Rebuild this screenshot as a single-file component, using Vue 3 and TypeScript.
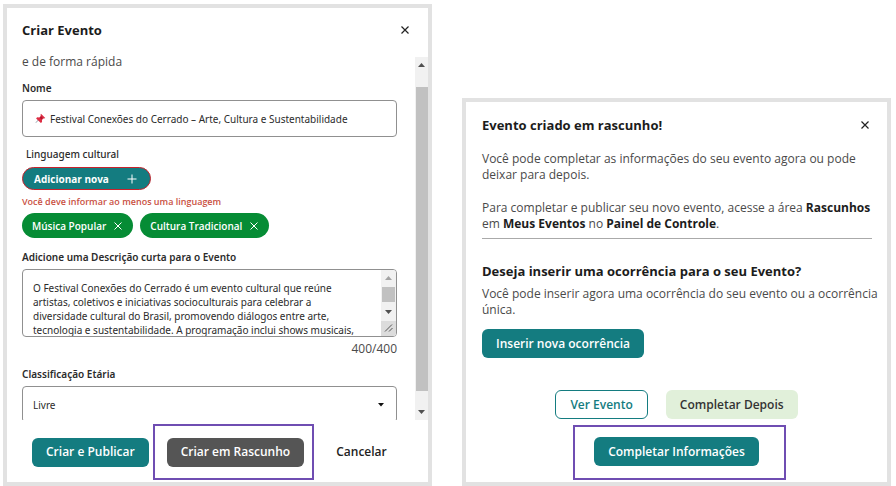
<script setup lang="ts">
import { ref } from 'vue'

const name = ref('Festival Conexões do Cerrado – Arte, Cultura e Sustentabilidade')
const description = ref(
  'O Festival Conexões do Cerrado é um evento cultural que reúne artistas, coletivos e iniciativas socioculturais para celebrar a diversidade cultural do Brasil, promovendo diálogos entre arte, tecnologia e sustentabilidade. A programação inclui shows musicais,'
)
const rating = ref('Livre')
const languages = ref<string[]>(['Música Popular', 'Cultura Tradicional'])

function removeLanguage(item: string): void {
  languages.value = languages.value.filter((l) => l !== item)
}
</script>

<template>
  <main class="stage">
    <section class="dialog" role="dialog" aria-labelledby="create-title">
      <header class="head">
        <h2 id="create-title">Criar Evento</h2>
        <button class="close" type="button" aria-label="Fechar">
          <svg viewBox="0 0 8 8" width="8" height="8"><path d="M.5.5l7 7M7.5.5l-7 7" /></svg>
        </button>
      </header>

      <div class="scroller">
        <form id="event-form" class="form" @submit.prevent>
          <p class="intro">e de forma rápida</p>

          <label class="label" for="name">Nome</label>
          <div class="field name-field">
            <svg class="pin" viewBox="0 0 12 12" width="11" height="11">
              <path d="M3.600 7.600L1 10.600" stroke="#8a97a0" stroke-width="1" />
              <path d="M6.500.8l4.700 4.700-1.200.6-.9-.2-1.500 1.600.1 2.300-1.300 1.200L1.200 6l1.200-1.300 2.300.1L6.300 3.200 6 2.200z" fill="#dd2e44" />
              <path d="M5.200 5.200l1.800 1.800 1.500-1.500-1.900-1.900z" fill="#b3152d" />
            </svg>
            <input id="name" v-model="name" type="text" />
          </div>

          <span id="lang-label" class="label lang-label">Linguagem cultural</span>
          <button class="add" type="button" aria-describedby="lang-error">
            Adicionar nova
            <svg viewBox="0 0 10 10" width="10" height="10"><path d="M5 .5v9M.5 5h9" /></svg>
          </button>
          <p id="lang-error" class="error">Você deve informar ao menos uma linguagem</p>
          <ul class="chips" aria-labelledby="lang-label">
            <li v-for="item in languages" :key="item" class="chip">
              {{ item }}
              <button type="button" :aria-label="`Remover ${item}`" @click="removeLanguage(item)">
                <svg viewBox="0 0 8 8" width="8" height="8"><path d="M.5.5l7 7M7.5.5l-7 7" /></svg>
              </button>
            </li>
          </ul>

          <label class="label desc-label" for="desc">Adicione uma Descrição curta para o Evento</label>
          <div class="field desc-field">
            <textarea id="desc" v-model="description" />
            <div class="bar" aria-hidden="true">
              <svg class="arrow muted" viewBox="0 0 7 4" width="7" height="4"><path d="M0 4l3.500-4L7 4z" /></svg>
              <span class="bar-thumb"></span>
              <svg class="arrow" viewBox="0 0 7 4" width="7" height="4"><path d="M0 0l3.500 4L7 0z" /></svg>
              <span class="grip">
                <svg viewBox="0 0 10 10" width="10" height="10"><path d="M1 8.500l7-7M5 8.500l3.500-3.500" /></svg>
              </span>
            </div>
          </div>
          <p class="counter">400/400</p>

          <label class="label" for="rating">Classificação Etária</label>
          <div class="field select-field">
            <select id="rating" v-model="rating">
              <option>Livre</option>
            </select>
            <svg viewBox="0 0 6 4" width="6" height="4"><path d="M0 0h6L3 3.500z" /></svg>
          </div>
        </form>

        <div class="scrollbar" aria-hidden="true">
          <svg class="arrow" viewBox="0 0 7 4" width="7" height="4"><path d="M0 4l3.500-4L7 4z" /></svg>
          <span class="thumb"></span>
          <svg class="arrow" viewBox="0 0 7 4" width="7" height="4"><path d="M0 0l3.500 4L7 0z" /></svg>
        </div>
      </div>

      <footer class="foot">
        <button class="btn" type="submit" form="event-form">Criar e Publicar</button>
        <div class="marked">
          <button class="btn dark" type="button">Criar em Rascunho</button>
        </div>
        <button class="btn plain" type="button">Cancelar</button>
      </footer>
    </section>

    <section class="dialog" role="dialog" aria-labelledby="draft-title">
      <header class="head draft-head">
        <h2 id="draft-title">Evento criado em rascunho!</h2>
        <button class="close" type="button" aria-label="Fechar">
          <svg viewBox="0 0 8 8" width="8" height="8"><path d="M.5.5l7 7M7.5.5l-7 7" /></svg>
        </button>
      </header>
      <div class="draft-body">
        <p>Você pode completar as informações do seu evento agora ou pode deixar para depois.</p>
        <p class="second">
          Para completar e publicar seu novo evento, acesse a área <b>Rascunhos</b> em
          <b>Meus Eventos</b> no <b>Painel de Controle</b>.
        </p>
        <hr />
        <h3>Deseja inserir uma ocorrência para o seu Evento?</h3>
        <p>Você pode inserir agora uma ocorrência do seu evento ou a ocorrência única.</p>
        <button class="btn insert" type="button">Inserir nova ocorrência</button>
      </div>
      <footer class="draft-foot">
        <button class="btn outline" type="button">Ver Evento</button>
        <button class="btn soft" type="button">Completar Depois</button>
        <div class="marked wide">
          <button class="btn" type="button">Completar Informações</button>
        </div>
      </footer>
    </section>
  </main>
</template>

<style>
body {
  margin: 0;
  background: #fff;
}
</style>

<style scoped>
* {
  box-sizing: border-box;
}

.stage {
  display: grid;
  grid-template-columns: 1fr 1fr;
  align-items: end;
  gap: 30px;
  min-height: 100vh;
  padding: 4px 5px 0 3px;
  font: 12px/16px 'Open Sans', 'Noto Sans', sans-serif;
  color: #2b2b2b;
}

h2,
h3,
p,
ul {
  margin: 0;
  padding: 0;
}

button,
input,
textarea,
select {
  margin: 0;
  padding: 0;
  border: 0;
  background: none;
  font: inherit;
  color: inherit;
  outline: none;
}

svg {
  display: block;
  flex: none;
  fill: none;
}

.dialog {
  min-width: 0;
  border: 4px solid #e2e2e2;
  background: #fff;
}

.head {
  display: flex;
  align-items: center;
  justify-content: space-between;
  height: 45px;
  padding: 0 19px 1px 15px;
}

.head h2,
h3 {
  font-size: 13px;
  line-height: 18px;
  font-weight: 700;
  color: #1c1c1c;
}

.close {
  display: grid;
  place-items: center;
  stroke: #222;
  stroke-width: 1.2;
}

.scroller {
  display: flex;
  height: 367px;
  overflow: hidden;
}

.form {
  flex: 1;
  min-width: 0;
  padding: 0 18px 0 15px;
}

.intro {
  margin-bottom: 10px;
  font-size: 12px;
  line-height: 17px;
  color: #4a4a4a;
}

.label {
  display: block;
  margin-bottom: 4px;
  font-family: 'Noto Sans', 'Open Sans', sans-serif;
  font-size: 10px;
  line-height: 16px;
  font-weight: 600;
}

.field {
  display: flex;
  border: 1px solid #909090;
  border-radius: 4px;
  font-family: 'Noto Sans', 'Open Sans', sans-serif;
  font-size: 10px;
}

.name-field {
  align-items: center;
  gap: 4px;
  height: 37px;
  padding: 0 12px;
}

.name-field input {
  flex: 1;
  min-width: 0;
}

.lang-label {
  margin: 9px 0 5px 4px;
  font-weight: 500;
}

.add {
  display: flex;
  align-items: center;
  gap: 18px;
  height: 23px;
  padding: 0 13px 0 11px;
  border: 1px solid #c8232c;
  border-radius: 12px;
  background: #147c80;
  color: #fff;
  font-size: 10px;
  font-weight: 700;
  stroke-width: 1;
}

.add svg,
.chip svg {
  stroke: #fff;
}

.error {
  margin: 4px 0 3px;
  font-size: 9px;
  font-weight: 600;
  color: #c9503f;
}

.chips {
  display: flex;
  gap: 7px;
  list-style: none;
}

.chip {
  display: flex;
  align-items: center;
  gap: 8px;
  height: 25px;
  padding: 0 11px 0 10px;
  border-radius: 13px;
  background: #068c35;
  color: #fff;
  font-size: 10px;
  font-weight: 600;
}

.desc-label {
  margin-top: 11px;
}

.desc-field {
  height: 68px;
  overflow: hidden;
}

textarea {
  flex: 1;
  min-width: 0;
  padding: 11px 24px 0 10px;
  line-height: 14px;
  overflow: hidden;
  resize: none;
}

.bar {
  display: flex;
  flex-direction: column;
  align-items: center;
  justify-content: space-between;
  width: 15px;
  padding-top: 6px;
  background: #f1f1f1;
}

.arrow {
  fill: #505050;
}

.muted {
  fill: #a3a3a3;
}

.bar-thumb {
  width: 13px;
  height: 15px;
  background: #c1c1c1;
}

.grip {
  display: grid;
  place-items: center;
  width: 15px;
  height: 15px;
  background: #dcdcdc;
  stroke: #555;
}

.counter {
  margin: 3px 0 9px;
  line-height: 17px;
  text-align: right;
  color: #4a4a4a;
}

.select-field {
  align-items: center;
  height: 37px;
  padding: 0 12px 0 10px;
}

.select-field select {
  flex: 1;
  appearance: none;
}

.select-field svg {
  fill: #111;
}

.scrollbar {
  display: flex;
  flex-direction: column;
  align-items: center;
  justify-content: space-between;
  width: 13px;
  margin-top: 4px;
  padding: 6px 0;
  background: #f1f1f1;
}

.thumb {
  width: 12px;
  height: 304px;
  background: #c1c1c1;
}

.foot {
  display: flex;
  align-items: center;
  gap: 18px;
  height: 62px;
  padding: 2px 25px 0;
}

.btn {
  height: 29px;
  padding: 0 14px;
  border-radius: 6px;
  background: #147c80;
  color: #fff;
  font-size: 12px;
  font-weight: 600;
  white-space: nowrap;
}

.dark {
  background: #555;
}

.plain {
  background: none;
  color: #222;
}

.marked {
  position: relative;
}

.marked::after {
  content: '';
  position: absolute;
  inset: -14px -10px -13px -14px;
  border: 2px solid #6f4db2;
  pointer-events: none;
}

.draft-head {
  height: 46px;
  padding: 0 18px 0 16px;
}

.draft-body {
  padding: 3px 8px 0 16px;
  color: #4a4a4a;
}

.draft-body p {
  line-height: 16px;
}

.draft-body b {
  color: #1c1c1c;
}

.draft-body .second {
  margin-top: 17px;
}

hr {
  height: 1px;
  margin: 6px 7px 23px 0;
  border: 0;
  background: #aaa;
}

h3 {
  margin-bottom: 6px;
}

.insert {
  display: block;
  margin-top: 11px;
}

.draft-foot {
  display: flex;
  flex-wrap: wrap;
  justify-content: center;
  gap: 18px;
  padding: 32px 60px 16px;
}

.outline {
  border: 1px solid #147c80;
  background: #fff;
  color: #147c80;
}

.soft {
  background: #e1f0da;
  color: #333;
}

.wide::after {
  inset: -12px -27px -14px -21px;
}
</style>
